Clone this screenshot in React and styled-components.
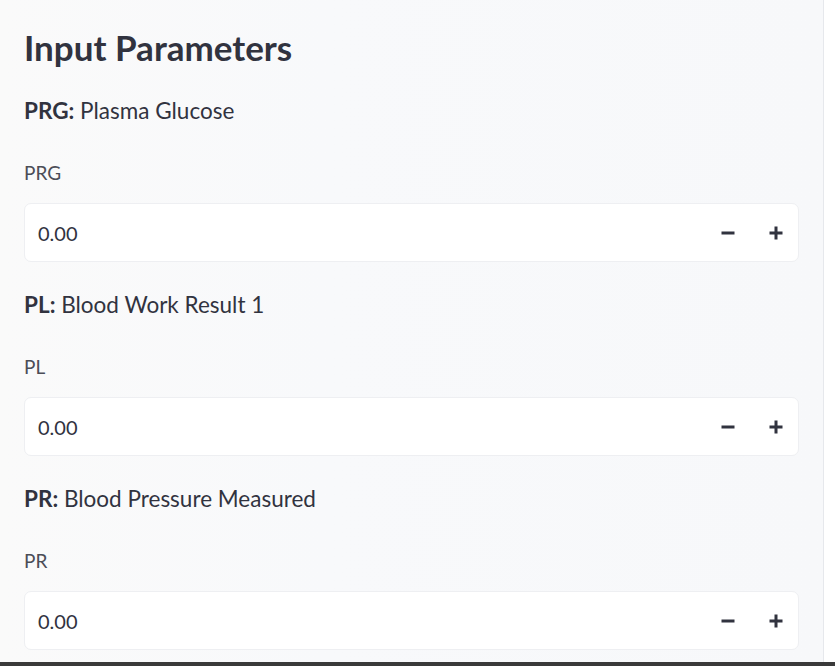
import styled, { createGlobalStyle } from "styled-components";

const GlobalStyle = createGlobalStyle`
html, body {
  margin: 0;
  padding: 0;
  background: #ffffff;
}
body {
  font-family: 'Lato', 'Noto Sans', sans-serif;
  color: #31333f;
}
`

const fields = [
    { code: "PRG", name: "Plasma Glucose" },
    { code: "PL", name: "Blood Work Result 1" },
    { code: "PR", name: "Blood Pressure Measured" },
];

export default function App() {
    return (
        <Page>
            <GlobalStyle />
            <Sidebar>
                <Title>Input Parameters</Title>
                {fields.map((f) => (
                    <Field key={f.code}>
                        <Description><b>{f.code}:</b> {f.name}</Description>
                        <Label>{f.code}</Label>
                        <NumberBox>
                            <Value>0.00</Value>
                            <StepButton aria-label="decrement">
                                <svg width="14" height="14" viewBox="0 0 14 14">
                                    <rect x="0.5" y="5.5" width="13" height="3" fill="#31333f" />
                                </svg>
                            </StepButton>
                            <StepButton aria-label="increment">
                                <svg width="14" height="14" viewBox="0 0 14 14">
                                    <rect x="0.5" y="5.5" width="13" height="3" fill="#31333f" />
                                    <rect x="5.5" y="0.5" width="3" height="13" fill="#31333f" />
                                </svg>
                            </StepButton>
                        </NumberBox>
                    </Field>
                ))}
            </Sidebar>
            <BottomBar />
        </Page>
    )
}

const Page = styled.div`
width: 835px;
height: 666px;
display: flex;
flex-direction: column;
overflow: hidden;
`

const Sidebar = styled.div`
flex: 1;
width: 824px;
border-right: 1px solid #e6e8ec;
background: linear-gradient(90deg, #fafafa 0%, #f8f9fb 40%, #f7f8fa 100%);
padding: 24px 24px 0 24px;
box-sizing: border-box;
overflow: hidden;
`

const Title = styled.h2`
margin: 0;
font-size: 35px;
font-weight: 700;
line-height: 46px;
`

const Field = styled.div`
margin-top: 27px;

& + & {
  margin-top: 29px;
}
`

const Description = styled.div`
font-size: 22.5px;
line-height: 28px;
`

const Label = styled.div`
margin-top: 36px;
font-size: 19px;
line-height: 24px;
color: #4b4d57;
`

const NumberBox = styled.div`
margin-top: 18px;
height: 57px;
background: #ffffff;
border: 1px solid #eeeff2;
border-radius: 7px;
display: flex;
align-items: center;
padding: 0 8px 0 13px;
gap: 20px;
`

const Value = styled.div`
flex: 1;
font-size: 20px;
`

const StepButton = styled.div`
width: 28px;
height: 28px;
display: flex;
align-items: center;
justify-content: center;
`

const BottomBar = styled.div`
height: 4px;
background: #3a3a3a;
`
